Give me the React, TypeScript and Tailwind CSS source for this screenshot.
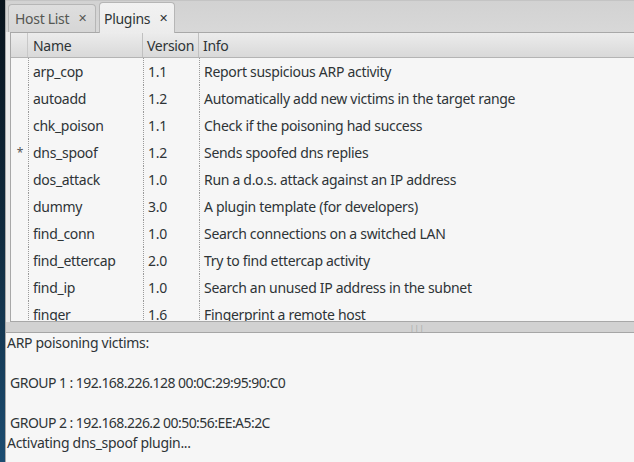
import React from "react";

const rows: [string, string, string, boolean][] = [
  ["arp_cop", "1.1", "Report suspicious ARP activity", false],
  ["autoadd", "1.2", "Automatically add new victims in the target range", false],
  ["chk_poison", "1.1", "Check if the poisoning had success", false],
  ["dns_spoof", "1.2", "Sends spoofed dns replies", true],
  ["dos_attack", "1.0", "Run a d.o.s. attack against an IP address", false],
  ["dummy", "3.0", "A plugin template (for developers)", false],
  ["find_conn", "1.0", "Search connections on a switched LAN", false],
  ["find_ettercap", "2.0", "Try to find ettercap activity", false],
  ["find_ip", "1.0", "Search an unused IP address in the subnet", false],
  ["finger", "1.6", "Fingerprint a remote host", false],
];

export default function App() {
  return (
    <div
      className="flex h-[462px] w-[634px] overflow-hidden text-[14px] tracking-[-0.3px] text-[#2e3436]"
      style={{ fontFamily: '"Noto Sans", "Open Sans", sans-serif' }}
    >
      <div className="w-[5px] shrink-0 bg-gradient-to-b from-[#09141d] via-[#0f2a3e] to-[#1c4d72]" />
      <div className="flex min-w-0 flex-1 flex-col border-l border-[#a9a9a9] bg-[#d6d6d6]">
        {/* Tab bar */}
        <div className="relative flex h-[32px] shrink-0 items-end gap-[3px] border-t border-[#c4c4c4] bg-gradient-to-b from-[#d2d2d2] to-[#d8d8d8] pl-[2px]">
          <div className="flex h-[28px] w-[88px] items-center gap-[9px] rounded-t-[4px] border border-b-0 border-[#b6b6b6] bg-gradient-to-b from-[#dedede] to-[#d6d6d6] pl-[6px] text-[#555753]">
            <span>Host List</span>
            <span className="text-[11px]">✕</span>
          </div>
          <div className="relative z-10 -mb-[1px] flex h-[31px] w-[76px] items-center gap-[9px] rounded-t-[4px] border border-b-0 border-[#b6b6b6] bg-gradient-to-b from-[#f2f2f2] to-[#ececec] pl-[4px] text-[#2e3436]">
            <span>Plugins</span>
            <span className="text-[11px]">✕</span>
          </div>
        </div>

        {/* Table area */}
        <div className="flex h-[290px] shrink-0 flex-col bg-[#ececec] pl-[4px]">
          <div className="flex flex-1 flex-col overflow-hidden border-l border-t border-b border-[#a8a8a8] bg-[#f6f6f6]">
            <div className="flex h-[25px] shrink-0 border-b border-[#b4b4b4] bg-gradient-to-b from-[#ececec] to-[#d9d9d9] text-[#2e3436]">
              <div className="w-[17px] shrink-0 border-r border-[#c8c8c8]" />
              <div className="flex w-[115px] shrink-0 items-center border-r border-[#c0c0c0] pl-[5px]">Name</div>
              <div className="flex w-[56px] shrink-0 items-center border-r border-[#c0c0c0] pl-[4px]">Version</div>
              <div className="flex flex-1 items-center pl-[4px]">Info</div>
            </div>
            {rows.map(([name, ver, info, mark]) => (
              <div key={name} className="flex h-[27px] shrink-0">
                <div className="flex w-[17px] shrink-0 items-center justify-end pr-[5px] text-[12px] text-[#555]">
                  {mark ? "*" : ""}
                </div>
                <div className="flex w-[115px] shrink-0 items-center border-l border-dotted border-[#9a9a9a] pl-[4px]">{name}</div>
                <div className="flex w-[56px] shrink-0 items-center border-l border-dotted border-[#9a9a9a] pl-[4px]">{ver}</div>
                <div className="flex flex-1 items-center whitespace-nowrap border-l border-dotted border-[#9a9a9a] pl-[4px]">{info}</div>
              </div>
            ))}
          </div>
        </div>

        {/* Pane separator */}
        <div className="flex h-[11px] shrink-0 items-center border-b border-[#a6a6a6] bg-[#d2d2d2] pl-[404px]">
          <span className="text-[7px] leading-none tracking-[1px] text-[#a0a0a0]">|||</span>
        </div>

        {/* Output text */}
        <div className="flex flex-1 flex-col whitespace-pre bg-[#f6f6f6] pl-[1px] leading-[20px] text-[#2e3436]">
          <div>ARP poisoning victims:</div>
          <div>{" "}</div>
          <div className="tracking-[-0.55px]">{" GROUP 1 : 192.168.226.128 00:0C:29:95:90:C0"}</div>
          <div>{" "}</div>
          <div className="tracking-[-0.55px]">{" GROUP 2 : 192.168.226.2 00:50:56:EE:A5:2C"}</div>
          <div>Activating dns_spoof plugin...</div>
        </div>
      </div>
    </div>
  );
}
